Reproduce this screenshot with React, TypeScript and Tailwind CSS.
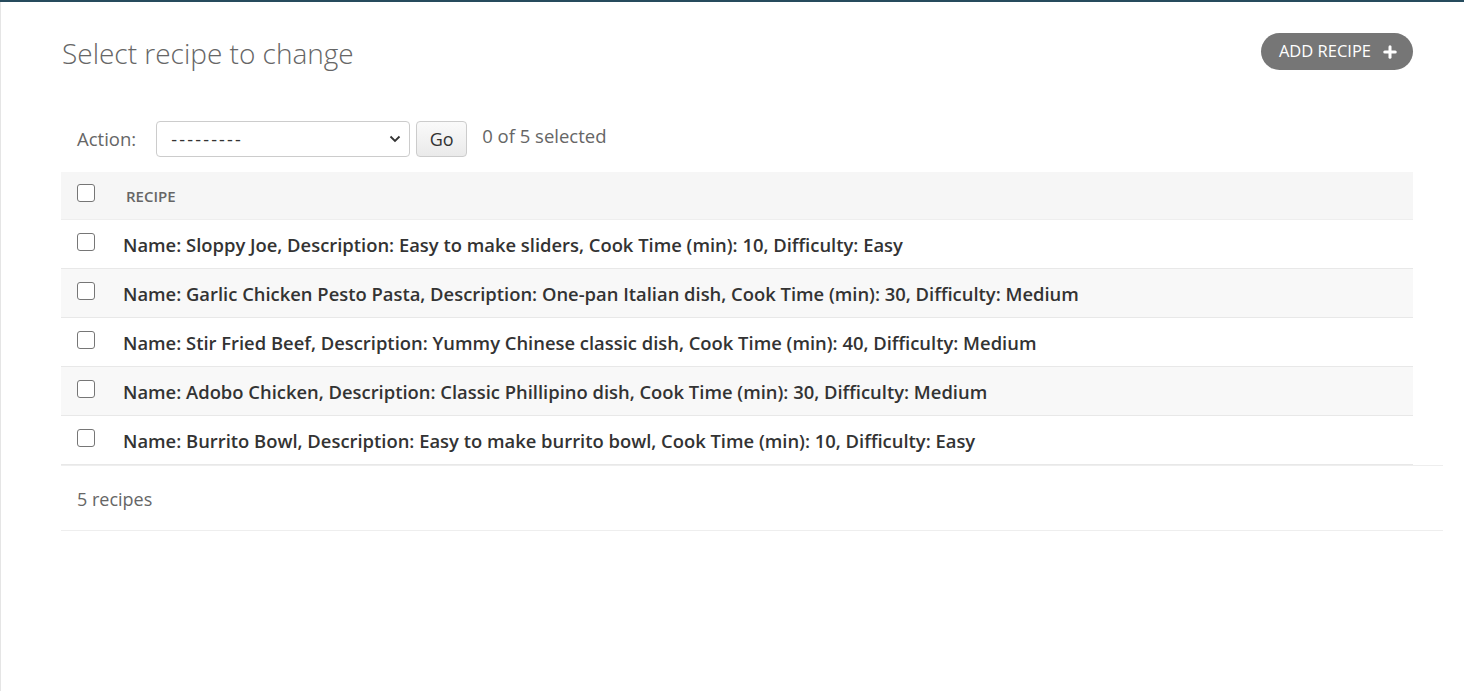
import { Plus } from "lucide-react";

const recipes = [
  "Name: Sloppy Joe, Description: Easy to make sliders, Cook Time (min): 10, Difficulty: Easy",
  "Name: Garlic Chicken Pesto Pasta, Description: One-pan Italian dish, Cook Time (min): 30, Difficulty: Medium",
  "Name: Stir Fried Beef, Description: Yummy Chinese classic dish, Cook Time (min): 40, Difficulty: Medium",
  "Name: Adobo Chicken, Description: Classic Phillipino dish, Cook Time (min): 30, Difficulty: Medium",
  "Name: Burrito Bowl, Description: Easy to make burrito bowl, Cook Time (min): 10, Difficulty: Easy",
];

function Box() {
  return (
    <span className="block w-[18px] h-[18px] rounded-[3px] border border-[#767676] bg-white" />
  );
}

export default function App() {
  return (
    <div
      className="min-h-[691px] bg-white border-t-2 border-[#264b5d] text-[#333]"
      style={{ fontFamily: '"Open Sans", "Noto Sans", sans-serif' }}
    >
      <div className="flex min-h-[689px]">
        <div className="w-px bg-[#e5e5e5]" />
        <div className="flex-1 pl-[60px] pr-[21px]">
          {/* Header */}
          <div className="flex items-start justify-between pt-[31px] pr-[30px]">
            <h1 className="text-[28px] font-light text-[#666] leading-[40px] ml-px">
              Select recipe to change
            </h1>
            <button className="h-[37px] pl-[18px] pr-[14px] rounded-full bg-[#767676] text-white text-[16.5px] uppercase flex items-center gap-[10px]">
              Add recipe
              <Plus className="w-[18px] h-[18px]" strokeWidth={4} />
            </button>
          </div>

          {/* Actions */}
          <div className="mt-[48px] flex items-center pl-[16px] pr-[30px]">
            <span className="text-[18.5px] text-[#666] mr-[20px]">Action:</span>
            <div className="relative w-[254px] h-[36px] border border-[#ccc] rounded-[4px] flex items-center pl-[14px]">
              <span className="text-[18px] tracking-[2.2px] text-[#333]">---------</span>
              <svg
                className="absolute right-[8px] top-[12px]"
                width="12"
                height="10"
                viewBox="0 0 12 10"
              >
                <path d="M1.5 2.5 L6 7 L10.5 2.5" fill="none" stroke="#333" strokeWidth="1.8" />
              </svg>
            </div>
            <button className="ml-[6px] w-[51px] h-[36px] border border-[#ccc] rounded-[4px] bg-gradient-to-b from-[#fafafa] to-[#eaeaea] text-[18px] text-[#333]">
              Go
            </button>
            <span className="ml-[15px] -mt-[6px] text-[18.5px] text-[#666]">0 of 5 selected</span>
          </div>

          {/* Table */}
          <div className="mt-[15px] mr-[30px]">
            <div className="h-[48px] flex items-center bg-[#f6f6f6] border-b border-[#eee]">
              <div className="w-[65px] pl-[16px] -mt-[6px]">
                <Box />
              </div>
              <span className="text-[15px] font-semibold text-[#666] uppercase mt-[2px]">Recipe</span>
            </div>
            {recipes.map((r, i) => (
              <div
                key={i}
                className={`h-[49px] flex items-center border-b border-[#e8e8e8] ${
                  i % 2 === 1 ? "bg-[#f8f8f8]" : "bg-white"
                }`}
              >
                <div className="w-[62px] pl-[16px] -mt-[4px]">
                  <Box />
                </div>
                <span className="text-[18.4px] font-semibold text-[#333] mt-[2px]">{r}</span>
              </div>
            ))}
          </div>
          <div className="border-t border-[#eee] h-[66px] flex items-center pl-[16px] pt-[2px] border-b">
            <span className="text-[18px] text-[#666]">5 recipes</span>
          </div>
        </div>
      </div>
    </div>
  );
}
